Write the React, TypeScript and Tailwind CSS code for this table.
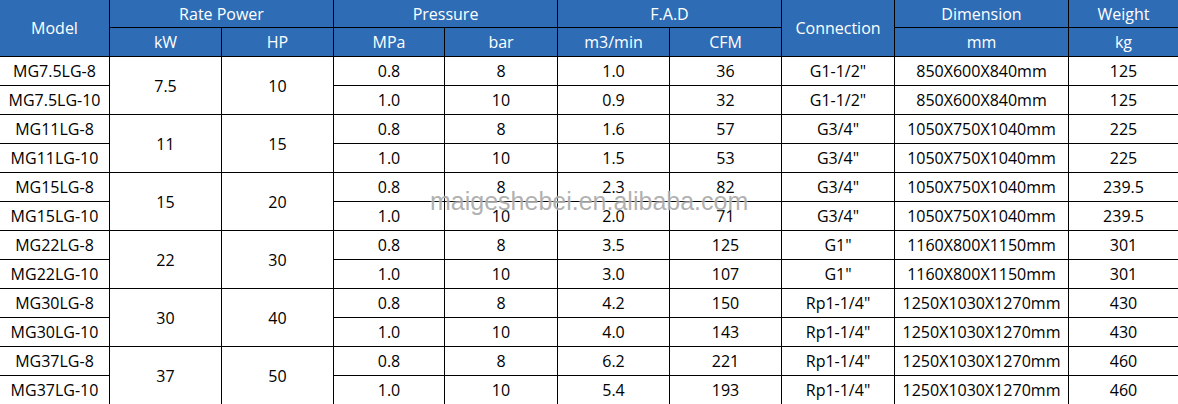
import React from 'react';

type Group = {
  name: string;
  kw: string;
  hp: string;
  rows: { mpa: string; bar: string; m3: string; cfm: string }[];
  conn: string;
  dim: string;
  kg: string;
};

const groups: Group[] = [
  { name: 'MG7.5LG', kw: '7.5', hp: '10', conn: 'G1-1/2"', dim: '850X600X840mm', kg: '125', rows: [{ mpa: '0.8', bar: '8', m3: '1.0', cfm: '36' }, { mpa: '1.0', bar: '10', m3: '0.9', cfm: '32' }] },
  { name: 'MG11LG', kw: '11', hp: '15', conn: 'G3/4"', dim: '1050X750X1040mm', kg: '225', rows: [{ mpa: '0.8', bar: '8', m3: '1.6', cfm: '57' }, { mpa: '1.0', bar: '10', m3: '1.5', cfm: '53' }] },
  { name: 'MG15LG', kw: '15', hp: '20', conn: 'G3/4"', dim: '1050X750X1040mm', kg: '239.5', rows: [{ mpa: '0.8', bar: '8', m3: '2.3', cfm: '82' }, { mpa: '1.0', bar: '10', m3: '2.0', cfm: '71' }] },
  { name: 'MG22LG', kw: '22', hp: '30', conn: 'G1"', dim: '1160X800X1150mm', kg: '301', rows: [{ mpa: '0.8', bar: '8', m3: '3.5', cfm: '125' }, { mpa: '1.0', bar: '10', m3: '3.0', cfm: '107' }] },
  { name: 'MG30LG', kw: '30', hp: '40', conn: 'Rp1-1/4"', dim: '1250X1030X1270mm', kg: '430', rows: [{ mpa: '0.8', bar: '8', m3: '4.2', cfm: '150' }, { mpa: '1.0', bar: '10', m3: '4.0', cfm: '143' }] },
  { name: 'MG37LG', kw: '37', hp: '50', conn: 'Rp1-1/4"', dim: '1250X1030X1270mm', kg: '460', rows: [{ mpa: '0.8', bar: '8', m3: '6.2', cfm: '221' }, { mpa: '1.0', bar: '10', m3: '5.4', cfm: '193' }] },
];

const head = 'flex items-center justify-center bg-[#2e6db5] text-white border-r border-b border-black';
const cell = 'flex items-center justify-center text-black border-r border-b border-black';

export default function App() {
  return (
    <div className="relative w-[1178px] h-[404px] overflow-hidden bg-white text-[16px] font-['Open_Sans',sans-serif]">
      <div className="grid grid-cols-[110px_112px_112px_111px_113px_112px_112px_113px_174px_109px] grid-rows-[28px_29px_repeat(12,29px)]">
        <div className={`${head} row-span-2`}>Model</div>
        <div className={`${head} col-span-2`}>Rate Power</div>
        <div className={`${head} col-span-2`}>Pressure</div>
        <div className={`${head} col-span-2`}>F.A.D</div>
        <div className={`${head} row-span-2`}>Connection</div>
        <div className={head}>Dimension</div>
        <div className={`${head} border-r-0`}>Weight</div>
        <div className={head}>kW</div>
        <div className={head}>HP</div>
        <div className={head}>MPa</div>
        <div className={head}>bar</div>
        <div className={head}>m3/min</div>
        <div className={head}>CFM</div>
        <div className={head}>mm</div>
        <div className={`${head} border-r-0`}>kg</div>

        {groups.map((g) => (
          <React.Fragment key={g.name}>
            <div className={cell}>{g.name}-8</div>
            <div className={`${cell} row-span-2`}>{g.kw}</div>
            <div className={`${cell} row-span-2`}>{g.hp}</div>
            <div className={cell}>{g.rows[0].mpa}</div>
            <div className={cell}>{g.rows[0].bar}</div>
            <div className={cell}>{g.rows[0].m3}</div>
            <div className={cell}>{g.rows[0].cfm}</div>
            <div className={cell}>{g.conn}</div>
            <div className={cell}>{g.dim}</div>
            <div className={`${cell} border-r-0`}>{g.kg}</div>
            <div className={cell}>{g.name}-10</div>
            <div className={cell}>{g.rows[1].mpa}</div>
            <div className={cell}>{g.rows[1].bar}</div>
            <div className={cell}>{g.rows[1].m3}</div>
            <div className={cell}>{g.rows[1].cfm}</div>
            <div className={cell}>{g.conn}</div>
            <div className={cell}>{g.dim}</div>
            <div className={`${cell} border-r-0`}>{g.kg}</div>
          </React.Fragment>
        ))}
      </div>

      {/* watermark */}
      <div className="absolute left-[430px] top-[186px] text-[25px] leading-[30px] font-['Liberation_Sans',sans-serif] text-[#9c9c9c]/80 [text-shadow:0_0_2px_rgba(255,255,255,0.9)] pointer-events-none">
        maigeshebei.en.alibaba.com
      </div>
    </div>
  );
}
